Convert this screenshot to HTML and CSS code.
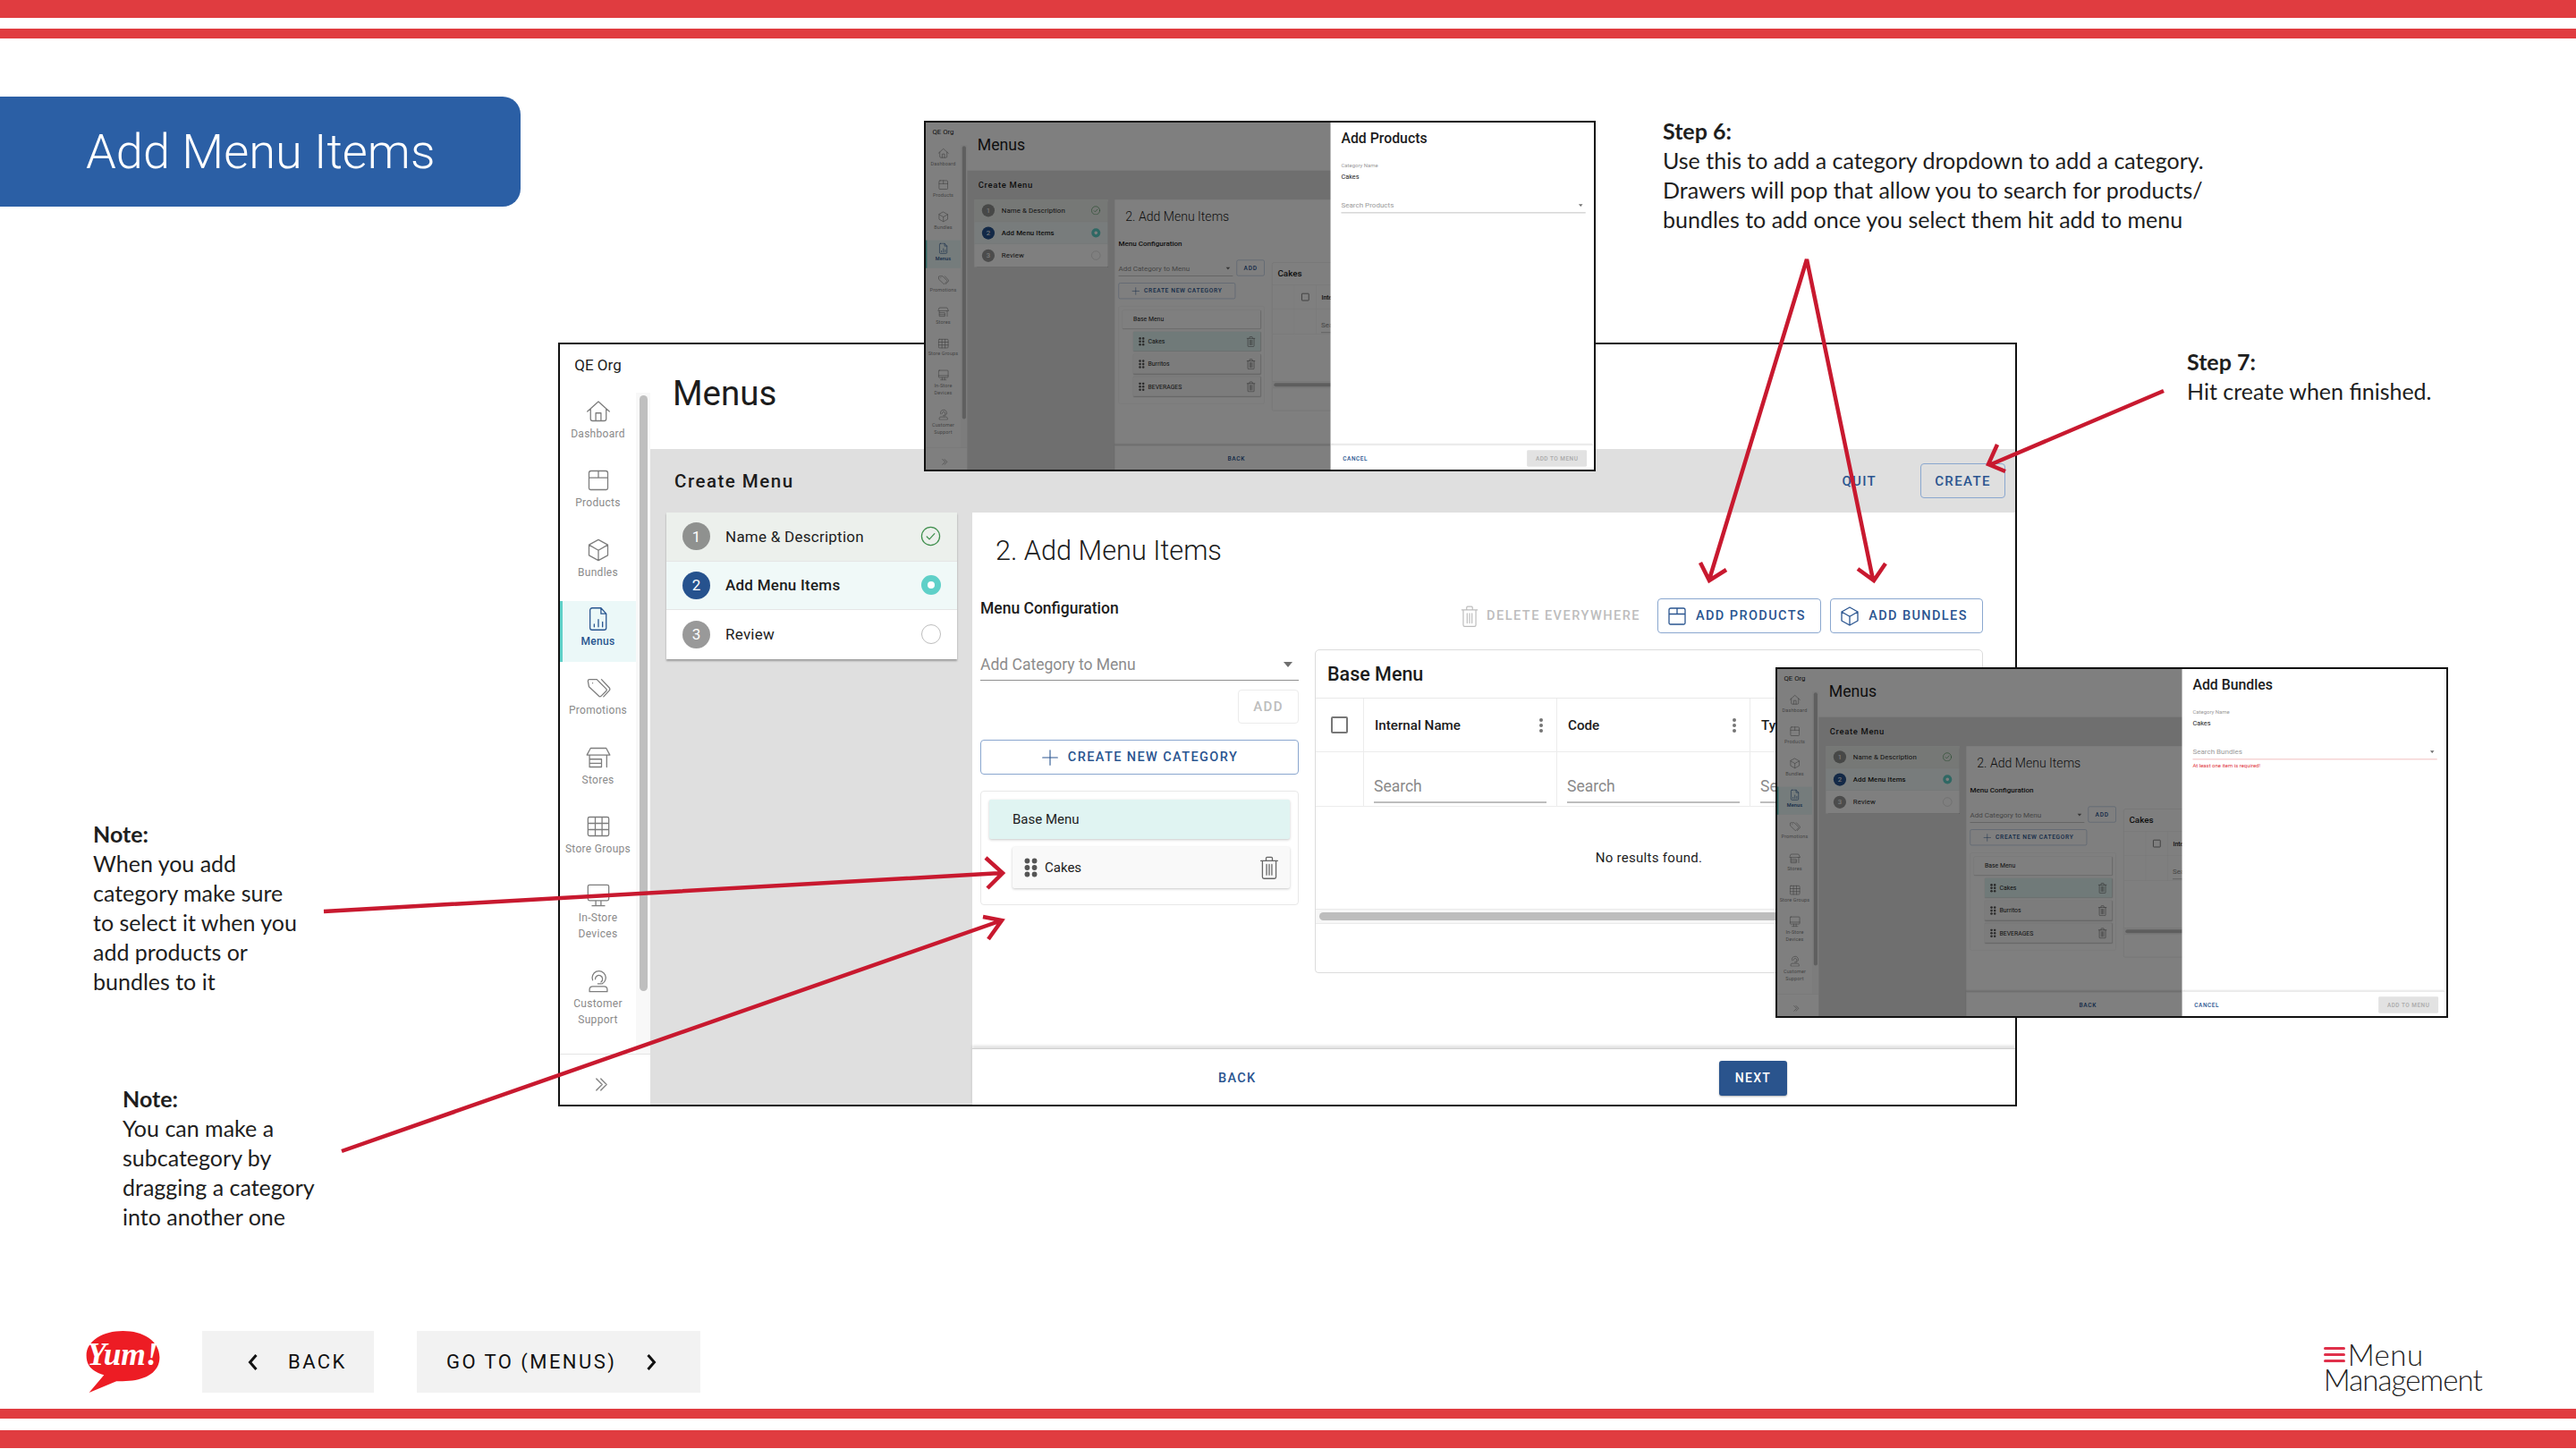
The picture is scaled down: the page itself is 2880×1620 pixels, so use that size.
FILE: index.html
```html
<!DOCTYPE html>
<html lang="en">
<head>
<meta charset="utf-8">
<title>Add Menu Items</title>
<link rel="stylesheet" href="styles.css">
</head>
<body>
<svg class="sprite" xmlns="http://www.w3.org/2000/svg">
  <symbol id="i-home" viewBox="0 0 24 24"><path d="M1.500 12 12 2.500 22.500 12M4.500 9.500V19a2 2 0 0 0 2 2h11a2 2 0 0 0 2-2V9.500M9.500 21v-7.500h5V21"/></symbol>
  <symbol id="i-box" viewBox="0 0 24 24"><path d="M5 3h14a2 2 0 0 1 2 2v14.500a1.500 1.500 0 0 1-1.500 1.500h-15A1.500 1.500 0 0 1 3 19.500V5a2 2 0 0 1 2-2zM3 9.500h18M12 3v6.500"/></symbol>
  <symbol id="i-cube" viewBox="0 0 24 24"><path d="m12 2 9 5v10l-9 5-9-5V7zM3 7l9 5.200L21 7M12 12.200V22"/></symbol>
  <symbol id="i-doc" viewBox="0 0 24 24"><path d="M6 1.500h8.500l5 5.500v13.500a2 2 0 0 1-2 2H6a2 2 0 0 1-2-2v-17a2 2 0 0 1 2-2zM14.500 1.500V7h5M8 19.500v-2.500M12 19.500v-7M16 19.500v-4.500"/></symbol>
  <symbol id="i-tags" viewBox="0 0 24 24"><path d="M2 5.500A1.500 1.500 0 0 1 3.500 4h7l9 9a1.500 1.500 0 0 1 0 2l-5 5a1.500 1.500 0 0 1-2 0L3 11zM15 4l7.500 8a2 2 0 0 1 0 2.500L17 20.500M6.500 7.500h.01"/></symbol>
  <symbol id="i-store" viewBox="0 0 24 24"><path d="M4.500 3h15l3.500 6.500H1zM3.500 9.500V21H15V13.500H3.500M3.500 17.500H15M20 9.500V21"/></symbol>
  <symbol id="i-grid" viewBox="0 0 24 24"><path d="M3.500 3h17a1.500 1.500 0 0 1 1.500 1.500v15a1.500 1.500 0 0 1-1.500 1.500h-17A1.500 1.500 0 0 1 2 19.500v-15A1.500 1.500 0 0 1 3.500 3zM2 9h20M2 15h20M9 3v18M15.500 3v18"/></symbol>
  <symbol id="i-screen" viewBox="0 0 24 24"><path d="M3.500 2h17A1.500 1.500 0 0 1 22 3.500v12a1.500 1.500 0 0 1-1.500 1.500h-17A1.500 1.500 0 0 1 2 15.500v-12A1.500 1.500 0 0 1 3.500 2zM2 13h20M9.500 17v5M14.500 17v5M6 22h12"/></symbol>
  <symbol id="i-head" viewBox="0 0 24 24"><path d="M6.500 11a6.500 6.500 0 1 1 9 3.500M9 10a3.500 3.500 0 1 1 5.500 2.800M11.500 14.500h3M3.500 22v-2.500a3 3 0 0 1 3-2.500h11a3 3 0 0 1 3 2.500V22z"/></symbol>
  <symbol id="i-chev2" viewBox="0 0 24 24"><path d="m4 3 9 9-9 9M11 3l9 9-9 9"/></symbol>
  <symbol id="i-trash" viewBox="0 0 24 24"><path d="M4 5.500h16M9 5.500V3a1 1 0 0 1 1-1h4a1 1 0 0 1 1 1v2.500M5.500 5.500V21a1.500 1.500 0 0 0 1.500 1.500h10a1.500 1.500 0 0 0 1.500-1.500V5.500M9.500 9v10M12 9v10M14.500 9v10"/></symbol>
  <symbol id="i-plus" viewBox="0 0 24 24"><path d="M12 2v20M2 12h20"/></symbol>
  <symbol id="i-check" viewBox="0 0 24 24"><circle cx="12" cy="12" r="10.500"/><path d="m7.500 12.500 3 3 6-6.500"/></symbol>
  <symbol id="i-grip" viewBox="0 0 14 20"><circle cx="3.200" cy="3" r="2.700"/><circle cx="10.800" cy="3" r="2.700"/><circle cx="3.200" cy="10" r="2.700"/><circle cx="10.800" cy="10" r="2.700"/><circle cx="3.200" cy="17" r="2.700"/><circle cx="10.800" cy="17" r="2.700"/></symbol>
  <symbol id="i-kebab" viewBox="0 0 6 18"><circle cx="3" cy="3" r="2"/><circle cx="3" cy="9" r="2"/><circle cx="3" cy="15" r="2"/></symbol>
  <symbol id="i-left" viewBox="0 0 12 20"><path d="M9.500 2 2.500 10l7 8"/></symbol>
  <symbol id="i-right" viewBox="0 0 12 20"><path d="m2.500 2 7 8-7 8"/></symbol>
</svg>

<div class="slide">
  <div class="stripes stripes-top"><span class="stripe stripe-a"></span><span class="stripe stripe-b"></span></div>
  <h1 class="deck-title">Add Menu Items</h1>

  <div class="stage">
    <div class="win win-main">
      <aside class="side">
        <div class="org">QE Org</div>
        <div class="side-scroll">
          <nav class="nav">
            <a class="nav-item"><svg class="ic nav-ic"><use href="#i-home"/></svg><span>Dashboard</span></a>
            <a class="nav-item"><svg class="ic nav-ic"><use href="#i-box"/></svg><span>Products</span></a>
            <a class="nav-item"><svg class="ic nav-ic"><use href="#i-cube"/></svg><span>Bundles</span></a>
            <a class="nav-item is-active"><svg class="ic nav-ic"><use href="#i-doc"/></svg><span>Menus</span></a>
            <a class="nav-item"><svg class="ic nav-ic"><use href="#i-tags"/></svg><span>Promotions</span></a>
            <a class="nav-item"><svg class="ic nav-ic"><use href="#i-store"/></svg><span>Stores</span></a>
            <a class="nav-item"><svg class="ic nav-ic"><use href="#i-grid"/></svg><span>Store Groups</span></a>
            <a class="nav-item nav-item-tall"><svg class="ic nav-ic"><use href="#i-screen"/></svg><span>In-Store<br>Devices</span></a>
            <a class="nav-item nav-item-tall"><svg class="ic nav-ic"><use href="#i-head"/></svg><span>Customer<br>Support</span></a>
          </nav>
          <div class="track"><div class="thumb"></div></div>
        </div>
        <div class="side-foot"><svg class="ic chev2"><use href="#i-chev2"/></svg></div>
      </aside>
      <div class="main">
        <header class="page-head"><h2 class="page-title">Menus</h2></header>
        <div class="work">
          <div class="work-bar">
            <h3 class="work-title">Create Menu</h3>
            <div class="work-actions">
              <span class="txt-btn">QUIT</span>
              <span class="btn btn-create">CREATE</span>
            </div>
          </div>
          <div class="work-body">
            <div class="step-col">
              <ol class="stepper">
                <li class="step step-done"><span class="num">1</span><span class="step-label">Name &amp; Description</span><svg class="ic st-check"><use href="#i-check"/></svg></li>
                <li class="step step-now"><span class="num">2</span><span class="step-label">Add Menu Items</span><span class="st-now"></span></li>
                <li class="step"><span class="num">3</span><span class="step-label">Review</span><span class="st-open"></span></li>
              </ol>
            </div>
            <section class="card">
              <div class="card-body">
                <h3 class="card-title">2. Add Menu Items</h3>
                <div class="cfg-head">
                  <h4 class="cfg-label">Menu Configuration</h4>
                  <div class="tools">
                    <span class="tool-del"><svg class="ic ic-20"><use href="#i-trash"/></svg>DELETE EVERYWHERE</span>
                    <span class="btn btn-tool btn-tool-products"><svg class="ic ic-20"><use href="#i-box"/></svg>ADD PRODUCTS</span>
                    <span class="btn btn-tool btn-tool-bundles"><svg class="ic ic-20"><use href="#i-cube"/></svg>ADD BUNDLES</span>
                  </div>
                </div>
                <div class="cfg">
                  <div class="cfg-left">
                    <div class="add-row">
                      <div class="select"><span>Add Category to Menu</span><i class="caret"></i></div>
                      <span class="btn btn-off">ADD</span>
                    </div>
                    <div class="btn btn-new"><svg class="ic ic-plus"><use href="#i-plus"/></svg>CREATE NEW CATEGORY</div>
                    <div class="cat-list">
                      <div class="cat-base is-sel">Base Menu</div>
                      <div class="cat-row"><svg class="grip"><use href="#i-grip"/></svg><span class="cat-name">Cakes</span><svg class="ic ic-trash"><use href="#i-trash"/></svg></div>
                    </div>
                  </div>
                  <div class="panel">
                    <h4 class="panel-title">Base Menu</h4>
                    <div class="tbl">
                      <div class="cell cell-box"><i class="checkbox"></i></div>
                      <div class="cell cell-h">Internal Name<svg class="kebab"><use href="#i-kebab"/></svg></div>
                      <div class="cell cell-h">Code<svg class="kebab"><use href="#i-kebab"/></svg></div>
                      <div class="cell cell-h">Type</div>
                      <div class="cell cell-low"></div>
                      <div class="cell cell-low"><span class="search">Search</span></div>
                      <div class="cell cell-low"><span class="search">Search</span></div>
                      <div class="cell cell-low"><span class="search">Search</span></div>
                      <div class="tbl-empty">No results found.</div>
                      <div class="tbl-scroll"><div class="tbl-thumb"></div></div>
                    </div>
                  </div>
                </div>
              </div>
              <footer class="card-foot">
                <span class="txt-btn foot-back">BACK</span>
                <span class="btn-next">NEXT</span>
              </footer>
            </section>
          </div>
        </div>
      </div>
    </div>

    <div class="shot shot-products">
      <div class="win win-mini">
        <aside class="side">
          <div class="org">QE Org</div>
          <div class="side-scroll">
            <nav class="nav">
              <a class="nav-item"><svg class="ic nav-ic"><use href="#i-home"/></svg><span>Dashboard</span></a>
              <a class="nav-item"><svg class="ic nav-ic"><use href="#i-box"/></svg><span>Products</span></a>
              <a class="nav-item"><svg class="ic nav-ic"><use href="#i-cube"/></svg><span>Bundles</span></a>
              <a class="nav-item is-active"><svg class="ic nav-ic"><use href="#i-doc"/></svg><span>Menus</span></a>
              <a class="nav-item"><svg class="ic nav-ic"><use href="#i-tags"/></svg><span>Promotions</span></a>
              <a class="nav-item"><svg class="ic nav-ic"><use href="#i-store"/></svg><span>Stores</span></a>
              <a class="nav-item"><svg class="ic nav-ic"><use href="#i-grid"/></svg><span>Store Groups</span></a>
              <a class="nav-item nav-item-tall"><svg class="ic nav-ic"><use href="#i-screen"/></svg><span>In-Store<br>Devices</span></a>
              <a class="nav-item nav-item-tall"><svg class="ic nav-ic"><use href="#i-head"/></svg><span>Customer<br>Support</span></a>
            </nav>
            <div class="track"><div class="thumb"></div></div>
          </div>
          <div class="side-foot"><svg class="ic chev2"><use href="#i-chev2"/></svg></div>
        </aside>
        <div class="main">
          <header class="page-head"><h2 class="page-title">Menus</h2></header>
          <div class="work">
            <div class="work-bar"><h3 class="work-title">Create Menu</h3></div>
            <div class="work-body">
              <div class="step-col">
                <ol class="stepper">
                  <li class="step step-done"><span class="num">1</span><span class="step-label">Name &amp; Description</span><svg class="ic st-check"><use href="#i-check"/></svg></li>
                  <li class="step step-now"><span class="num">2</span><span class="step-label">Add Menu Items</span><span class="st-now"></span></li>
                  <li class="step"><span class="num">3</span><span class="step-label">Review</span><span class="st-open"></span></li>
                </ol>
              </div>
              <section class="card">
                <div class="card-body">
                  <h3 class="card-title">2. Add Menu Items</h3>
                  <div class="cfg-head"><h4 class="cfg-label">Menu Configuration</h4></div>
                  <div class="cfg">
                    <div class="cfg-left">
                      <div class="add-row">
                        <div class="select"><span>Add Category to Menu</span><i class="caret"></i></div>
                        <span class="btn btn-add">ADD</span>
                      </div>
                      <div class="btn btn-new"><svg class="ic ic-plus"><use href="#i-plus"/></svg>CREATE NEW CATEGORY</div>
                      <div class="cat-list">
                        <div class="cat-base">Base Menu</div>
                        <div class="cat-row is-sel"><svg class="grip"><use href="#i-grip"/></svg><span class="cat-name">Cakes</span><svg class="ic ic-trash"><use href="#i-trash"/></svg></div>
                        <div class="cat-row"><svg class="grip"><use href="#i-grip"/></svg><span class="cat-name">Burritos</span><svg class="ic ic-trash"><use href="#i-trash"/></svg></div>
                        <div class="cat-row"><svg class="grip"><use href="#i-grip"/></svg><span class="cat-name">BEVERAGES</span><svg class="ic ic-trash"><use href="#i-trash"/></svg></div>
                      </div>
                    </div>
                    <div class="panel">
                      <h4 class="panel-title">Cakes</h4>
                      <div class="tbl tbl-drag">
                        <div class="cell"></div>
                        <div class="cell cell-box"><i class="checkbox"></i></div>
                        <div class="cell cell-h">Internal Name</div>
                        <div class="cell cell-low"></div>
                        <div class="cell cell-low"></div>
                        <div class="cell cell-low"><span class="search">Search</span></div>
                        <div class="tbl-empty"></div>
                        <div class="tbl-scroll"><div class="tbl-thumb"></div></div>
                      </div>
                    </div>
                  </div>
                </div>
                <footer class="card-foot"><span class="txt-btn foot-back">BACK</span></footer>
              </section>
            </div>
          </div>
        </div>
        <div class="scrim"></div>
        <div class="drawer">
          <h3 class="drawer-title">Add Products</h3>
          <div class="drawer-body">
            <div class="field-label">Category Name</div>
            <div class="field-value">Cakes</div>
            <div class="select drawer-select"><span>Search Products</span><i class="caret"></i></div>
          </div>
          <footer class="drawer-foot"><span class="txt-btn drawer-cancel">CANCEL</span><span class="btn-disabled">ADD TO MENU</span></footer>
        </div>
      </div>
    </div>

    <div class="shot shot-bundles">
      <div class="win win-mini">
        <aside class="side">
          <div class="org">QE Org</div>
          <div class="side-scroll">
            <nav class="nav">
              <a class="nav-item"><svg class="ic nav-ic"><use href="#i-home"/></svg><span>Dashboard</span></a>
              <a class="nav-item"><svg class="ic nav-ic"><use href="#i-box"/></svg><span>Products</span></a>
              <a class="nav-item"><svg class="ic nav-ic"><use href="#i-cube"/></svg><span>Bundles</span></a>
              <a class="nav-item is-active"><svg class="ic nav-ic"><use href="#i-doc"/></svg><span>Menus</span></a>
              <a class="nav-item"><svg class="ic nav-ic"><use href="#i-tags"/></svg><span>Promotions</span></a>
              <a class="nav-item"><svg class="ic nav-ic"><use href="#i-store"/></svg><span>Stores</span></a>
              <a class="nav-item"><svg class="ic nav-ic"><use href="#i-grid"/></svg><span>Store Groups</span></a>
              <a class="nav-item nav-item-tall"><svg class="ic nav-ic"><use href="#i-screen"/></svg><span>In-Store<br>Devices</span></a>
              <a class="nav-item nav-item-tall"><svg class="ic nav-ic"><use href="#i-head"/></svg><span>Customer<br>Support</span></a>
            </nav>
            <div class="track"><div class="thumb"></div></div>
          </div>
          <div class="side-foot"><svg class="ic chev2"><use href="#i-chev2"/></svg></div>
        </aside>
        <div class="main">
          <header class="page-head"><h2 class="page-title">Menus</h2></header>
          <div class="work">
            <div class="work-bar"><h3 class="work-title">Create Menu</h3></div>
            <div class="work-body">
              <div class="step-col">
                <ol class="stepper">
                  <li class="step step-done"><span class="num">1</span><span class="step-label">Name &amp; Description</span><svg class="ic st-check"><use href="#i-check"/></svg></li>
                  <li class="step step-now"><span class="num">2</span><span class="step-label">Add Menu Items</span><span class="st-now"></span></li>
                  <li class="step"><span class="num">3</span><span class="step-label">Review</span><span class="st-open"></span></li>
                </ol>
              </div>
              <section class="card">
                <div class="card-body">
                  <h3 class="card-title">2. Add Menu Items</h3>
                  <div class="cfg-head"><h4 class="cfg-label">Menu Configuration</h4></div>
                  <div class="cfg">
                    <div class="cfg-left">
                      <div class="add-row">
                        <div class="select"><span>Add Category to Menu</span><i class="caret"></i></div>
                        <span class="btn btn-add">ADD</span>
                      </div>
                      <div class="btn btn-new"><svg class="ic ic-plus"><use href="#i-plus"/></svg>CREATE NEW CATEGORY</div>
                      <div class="cat-list">
                        <div class="cat-base">Base Menu</div>
                        <div class="cat-row is-sel"><svg class="grip"><use href="#i-grip"/></svg><span class="cat-name">Cakes</span><svg class="ic ic-trash"><use href="#i-trash"/></svg></div>
                        <div class="cat-row"><svg class="grip"><use href="#i-grip"/></svg><span class="cat-name">Burritos</span><svg class="ic ic-trash"><use href="#i-trash"/></svg></div>
                        <div class="cat-row"><svg class="grip"><use href="#i-grip"/></svg><span class="cat-name">BEVERAGES</span><svg class="ic ic-trash"><use href="#i-trash"/></svg></div>
                      </div>
                    </div>
                    <div class="panel">
                      <h4 class="panel-title">Cakes</h4>
                      <div class="tbl tbl-drag">
                        <div class="cell"></div>
                        <div class="cell cell-box"><i class="checkbox"></i></div>
                        <div class="cell cell-h">Internal Name</div>
                        <div class="cell cell-low"></div>
                        <div class="cell cell-low"></div>
                        <div class="cell cell-low"><span class="search">Search</span></div>
                        <div class="tbl-empty"></div>
                        <div class="tbl-scroll"><div class="tbl-thumb"></div></div>
                      </div>
                    </div>
                  </div>
                </div>
                <footer class="card-foot"><span class="txt-btn foot-back">BACK</span></footer>
              </section>
            </div>
          </div>
        </div>
        <div class="scrim"></div>
        <div class="drawer">
          <h3 class="drawer-title">Add Bundles</h3>
          <div class="drawer-body">
            <div class="field-label">Category Name</div>
            <div class="field-value">Cakes</div>
            <div class="select drawer-select is-error"><span>Search Bundles</span><i class="caret"></i></div>
            <div class="field-error">At least one item is required!</div>
          </div>
          <footer class="drawer-foot"><span class="txt-btn drawer-cancel">CANCEL</span><span class="btn-disabled">ADD TO MENU</span></footer>
        </div>
      </div>
    </div>

    <div class="callout callout-step6"><strong>Step 6:</strong><br>Use this to add a category dropdown to add a category.<br>Drawers will pop that allow you to search for products/<br>bundles to add once you select them hit add to menu</div>
    <div class="callout callout-step7"><strong>Step 7:</strong><br>Hit create when finished.</div>
    <div class="callout callout-note1"><strong>Note:</strong><br>When you add<br>category make sure<br>to select it when you<br>add products or<br>bundles to it</div>
    <div class="callout callout-note2"><strong>Note:</strong><br>You can make a<br>subcategory by<br>dragging a category<br>into another one</div>

    <svg class="arrows" viewBox="0 0 2880 1620" xmlns="http://www.w3.org/2000/svg">
      <path d="M362 1019 1120 976M1102 959l19 17-17 17"/>
      <path d="M382 1287 1120 1029M1099 1025l21 4-15 21"/>
      <path d="M1911 648 2020 290 2094 648M1901 629l10 20 19-12M2077 636l18 13 13-19"/>
      <path d="M2419 437 2224 520M2233 497l-10 22 19 8"/>
    </svg>
  </div>

  <footer class="deck-foot">
    <svg class="yum" viewBox="0 0 83 70" xmlns="http://www.w3.org/2000/svg">
      <path class="yum-bubble" d="M41.500 0C64 0 83 11 83 30 83 48 65 57 41 57c-2 0-5 0-7 0L3 70 20 50C7 46 0 40 0 28 0 11 19 0 41.500 0z"/>
      <text class="yum-text" x="41" y="39" text-anchor="middle">Yum!</text>
    </svg>
    <a class="nav-btn nav-btn-back"><svg class="nav-chev"><use href="#i-left"/></svg>BACK</a>
    <a class="nav-btn nav-btn-go">GO TO (MENUS)<svg class="nav-chev"><use href="#i-right"/></svg></a>
    <div class="mm-logo">
      <div class="mm-top"><span class="mm-bars"><i></i><i></i><i></i></span><span>Menu</span></div>
      <div class="mm-bottom">Management</div>
    </div>
  </footer>
  <div class="stripes stripes-bottom"><span class="stripe stripe-b"></span><span class="stripe stripe-a"></span></div>
</div>
</body>
</html>
```

FILE: styles.css
```css
* { box-sizing: border-box; }
html, body { margin: 0; padding: 0; }
body { width: 2880px; height: 1620px; overflow: hidden; background: #fff; font-family: Roboto, "Liberation Sans", sans-serif; color: #1c1c1c; }
h1, h2, h3, h4, ol { margin: 0; padding: 0; font-weight: 400; }
ol { list-style: none; }
.sprite { position: absolute; width: 0; height: 0; }

.slide { position: relative; width: 2880px; height: 1620px; display: flex; flex-direction: column; background: #fff; }
.stripes { display: flex; flex-direction: column; flex: none; }
.stripe { display: block; background: #e03c40; }
.stripes-top { gap: 12px; }
.stripes-bottom { gap: 13px; margin-top: 18px; margin-bottom: 1px; }
.stripe-a { height: 20px; }
.stripe-b { height: 11px; }

.deck-title { flex: none; width: 582px; height: 123px; margin-top: 65px; padding-left: 96px; display: flex; align-items: center; background: #2b5fa5; border-radius: 0 20px 20px 0; color: #fff; font-weight: 300; font-size: 54.200px; white-space: nowrap; }

.stage { flex: 1; }

/* annotation windows on the slide canvas */
.win { display: flex; background: #fff; overflow: hidden; }
.win-main { position: absolute; left: 624px; top: 383px; width: 1631px; height: 854px; border: 2px solid #111; }
.shot { position: absolute; width: 751px; height: 392px; border: 2px solid #111; overflow: hidden; background: #fff; }
.shot-products { left: 1033px; top: 135px; }
.shot-bundles { left: 1985px; top: 746px; width: 752px; }
.win-mini { position: relative; width: 1627px; height: 850px; transform: scale(.4585); transform-origin: 0 0; }

/* sidebar */
.side { flex: none; width: 101px; display: flex; flex-direction: column; background: #fff; }
.org { flex: none; height: 54px; display: flex; align-items: center; justify-content: center; padding: 0 16px 8px 0; font-size: 17px; }
.side-scroll { flex: 1; min-height: 0; display: flex; }
.nav { flex: none; width: 85px; display: flex; flex-direction: column; gap: 9.330px; padding-top: 1px; }
.nav-item { display: flex; flex-direction: column; align-items: center; min-height: 68px; padding-top: 6px; font-size: 12px; line-height: 18px; letter-spacing: .3px; color: #8a8a8a; text-align: center; white-space: nowrap; }
.nav-item-tall { min-height: 86px; }
.nav-item .nav-ic { width: 28px; height: 28px; margin-bottom: 2px; color: #7d7d7d; stroke-width: 1.100; }
.nav-item.is-active { background: #ebf8f8; border-left: 3px solid #5fd0c8; color: #27548f; font-weight: 500; }
.nav-item.is-active .nav-ic { color: #27548f; margin-right: 3px; }
.nav-item.is-active span { margin-right: 3px; }
.track { flex: none; width: 16px; background: #f8f8f8; padding: 3px 3px 0 4px; }
.thumb { height: 666px; background: #bfbfbf; border-radius: 5px; }
.side-foot { flex: none; height: 57px; border-top: 1px solid #e4e4e4; display: flex; align-items: center; justify-content: center; padding: 10px 8px 0 0; }
.ic { width: 24px; height: 24px; fill: none; stroke: currentColor; stroke-width: 1.300; stroke-linecap: round; stroke-linejoin: round; flex: none; }
.chev2 { width: 17px; height: 17px; color: #8a8a8a; stroke-width: 2; }

/* main */
.main { flex: 1; min-width: 0; display: flex; flex-direction: column; }
.page-head { flex: none; height: 117px; padding: 0 0 8px 25px; display: flex; align-items: center; }
.page-title { font-size: 38.500px; }
.work { flex: 1; min-height: 0; display: flex; flex-direction: column; background: #dfdfdf; }
.work-bar { flex: none; height: 71px; padding: 0 11px 0 27px; display: flex; align-items: center; justify-content: space-between; }
.work-title { font-size: 20.500px; font-weight: 500; letter-spacing: 1.500px; }
.work-actions { display: flex; align-items: center; gap: 49px; }
.txt-btn { font-size: 15px; font-weight: 500; letter-spacing: 1.300px; color: #2a5590; }
.btn { display: flex; align-items: center; justify-content: center; border: 1.500px solid #8aa7cf; border-radius: 4px; background: transparent; color: #2a5590; font-size: 14.500px; font-weight: 500; letter-spacing: 1.400px; white-space: nowrap; }
.btn-create { width: 95px; height: 39px; font-size: 15px; }
.work-body { flex: 1; min-height: 0; display: flex; }
.step-col { flex: none; width: 360px; padding-left: 18px; }
.stepper { width: 325px; background: #fff; box-shadow: 0 2px 2px rgba(0,0,0,.3); }
.step { height: 54.600px; display: flex; align-items: center; padding: 0 18px; border-bottom: 1px solid #e6e6e6; background: #fff; }
.step:last-child { border-bottom: none; }
.step-done { background: #ecf0ec; }
.step-now { background: #f0f9f8; font-weight: 500; }
.num { flex: none; width: 31px; height: 31px; border-radius: 50%; background: #999; color: #fff; display: flex; align-items: center; justify-content: center; font-size: 17px; font-weight: 400; }
.step-now .num { background: #26528e; }
.step-done .num { background: #8f918f; }
.step-label { flex: 1; margin-left: 17px; font-size: 17px; letter-spacing: .25px; }
.st-check { width: 23px; height: 23px; color: #3f8f4d; }
.st-now { flex: none; width: 22px; height: 22px; border-radius: 50%; background: #fff; border: 7px solid #5fd0c8; }
.st-open { flex: none; width: 22px; height: 22px; border-radius: 50%; background: #fff; border: 1.500px solid #bdbdbd; }

.card { flex: 1; min-width: 0; display: flex; flex-direction: column; background: #fff; }
.card-body { flex: 1; min-height: 0; padding: 0 36px 0 9px; }
.card-title { height: 87px; padding: 25px 0 0 17px; font-size: 30.700px; font-weight: 300; line-height: 36px; }
.cfg-head { height: 48px; display: flex; justify-content: space-between; }
.cfg-label { height: 40px; display: flex; align-items: center; font-size: 17.500px; font-weight: 500; }
.tools { padding-top: 9px; display: flex; gap: 10px; align-items: flex-start; }
.tool-del { display: flex; align-items: center; gap: 6px; height: 39px; margin-right: 9px; color: #bdbdbd; font-size: 14.500px; font-weight: 500; letter-spacing: 1.500px; }
.tool-del .ic { width: 26px; height: 26px; stroke-width: 1.100; }
.ic-20 { width: 24px; height: 24px; }
.btn-tool { height: 39px; padding: 0 17px 0 10px; gap: 9px; }
.btn-tool-products { width: 183px; }
.btn-tool-bundles { width: 171px; }
.cfg { display: flex; gap: 18px; margin-top: 18px; }
.cfg-left { flex: none; width: 356px; }
.add-row { display: flex; flex-wrap: wrap; justify-content: flex-end; }
.select { width: 100%; height: 35px; display: flex; align-items: center; justify-content: space-between; border-bottom: 1px solid #8f8f8f; font-size: 17.500px; color: #8c8c8c; padding: 0 7px 0 0; }
.caret { width: 0; height: 0; border-left: 5.500px solid transparent; border-right: 5.500px solid transparent; border-top: 6px solid #6f6f6f; }
.btn-off { width: 68px; height: 38px; margin-top: 10px; border: 1.500px solid #ebebeb; color: #bdbdbd; font-size: 15px; }
.btn-new { height: 39px; margin-top: 18px; gap: 10px; }
.ic-plus { width: 20px; height: 20px; }
.cat-list { margin-top: 18px; padding: 9px 9px 18px; border: 1.500px solid #e8e8e8; border-radius: 4px; display: flex; flex-direction: column; gap: 9px; }
.cat-base { height: 44px; padding-left: 26px; display: flex; align-items: center; font-size: 15px; background: #fff; box-shadow: 0 1px 3px rgba(0,0,0,.22); border-radius: 2px; }
.cat-row { margin-left: 26px; height: 46px; padding: 0 9px 0 13px; display: flex; align-items: center; font-size: 15px; background: #f9f9f9; box-shadow: 0 1px 3px rgba(0,0,0,.22); border-radius: 2px; }
.cat-base.is-sel, .cat-row.is-sel { background: #e0f4f2; }
.grip { width: 15px; height: 22px; fill: #555; flex: none; }
.cat-name { flex: 1; margin-left: 8px; }
.ic-trash { width: 28px; height: 28px; color: #666; stroke-width: 1.100; }

.panel { flex: 1; min-width: 0; height: 362px; border: 1.500px solid #dcdcdc; border-radius: 5px 5px 4px 4px; overflow: hidden; }
.panel-title { height: 53px; padding-left: 13px; display: flex; align-items: center; font-size: 21.500px; font-weight: 500; }
.tbl { display: grid; grid-template-columns: 54px 216px 216px 1fr; grid-template-rows: 60px 61px 114px 17px; border-top: 1px solid #e8e8e8; }
.tbl-drag { grid-template-columns: 54px 54px 1fr; }
.cell { border-right: 1px solid #ececec; border-bottom: 1px solid #ececec; min-width: 0; }
.cell-box { display: flex; align-items: center; justify-content: center; }
.checkbox { width: 19px; height: 19px; border: 2px solid #777; border-radius: 2px; }
.cell-h { display: flex; align-items: center; justify-content: space-between; padding: 0 12px; font-size: 15.200px; font-weight: 500; }
.kebab { width: 6px; height: 18px; fill: #757575; flex: none; margin-right: 2px; }
.cell-low { display: flex; align-items: flex-end; padding: 0 11px 3px 11px; }
.search { display: block; width: 100%; height: 35px; border-bottom: 2px solid #bdbdbd; font-size: 17.500px; color: #8a8a8a; line-height: 32px; }
.tbl-empty { grid-column: 1 / -1; display: flex; align-items: center; justify-content: center; font-size: 15px; letter-spacing: .3px; }
.tbl-scroll { grid-column: 1 / -1; background: #f7f7f7; border-top: 1px solid #eaeaea; border-bottom: 1px solid #eaeaea; padding: 3px 4px; }
.tbl-thumb { height: 9px; width: 560px; background: #bdbdbd; border-radius: 5px; }
.card-foot { flex: none; height: 63px; display: flex; align-items: center; padding: 2px 255px 0 275px; justify-content: space-between; border-top: 1px solid #d0d0d0; box-shadow: 0 -3px 3px rgba(0,0,0,.12); position: relative; }
.foot-back { font-size: 14.500px; }
.btn-next { width: 76px; height: 39px; display: flex; align-items: center; justify-content: center; background: #2a548d; color: #fff; border-radius: 3px; font-size: 14px; font-weight: 500; letter-spacing: 1.300px; box-shadow: 0 1px 2px rgba(0,0,0,.3); }

/* mini variant */
.win-mini .add-row { flex-wrap: nowrap; align-items: flex-end; gap: 9px; height: 39px; margin-top: -6px; }
.win-mini .select { flex: 1; width: auto; }
.btn-add { flex: none; width: 68px; height: 39px; }
.win-mini .btn-new { margin-top: 17px; width: 285px; }
.win-mini .cat-list { gap: 8px; }
.win-mini .cat-row { height: 47px; }
.scrim { position: absolute; inset: 0; background: rgba(0,0,0,.5); }
.drawer { position: absolute; top: 0; right: 0; bottom: 0; width: 640px; background: #fff; display: flex; flex-direction: column; }
.drawer-title { flex: none; height: 77px; padding: 21px 0 0 26px; font-size: 34.500px; font-weight: 500; line-height: 36px; }
.drawer-body { flex: 1; padding: 0 18px 0 26px; }
.field-label { margin-top: 20px; font-size: 13px; color: #9a9a9a; }
.field-value { margin-top: 11px; font-size: 16px; }
.drawer-select { margin-top: 43px; height: 36px; border-bottom: 2px solid #bdbdbd; color: #9a9a9a; }
.drawer-select.is-error { border-bottom-color: #f0b8b8; }
.field-error { margin-top: 7px; font-size: 13px; color: #e0343c; }
.drawer-foot { flex: none; height: 64px; display: flex; align-items: center; justify-content: space-between; padding: 0 15px 0 30px; border-top: 1px solid #d0d0d0; box-shadow: 0 -2px 3px rgba(0,0,0,.12); }
.btn-disabled { width: 146px; height: 40px; display: flex; align-items: center; justify-content: center; background: #e2e2e2; color: #aaa; border-radius: 3px; font-size: 14px; font-weight: 500; letter-spacing: 1.100px; }
.drawer-cancel { font-size: 14px; }

/* callouts */
.callout { position: absolute; font-family: Lato, "Open Sans", sans-serif; font-size: 25px; line-height: 33px; color: #1e1e1e; white-space: nowrap; }
.callout strong { font-weight: 700; }
.callout-step6 { left: 1859px; top: 130px; }
.callout-step7 { left: 2445px; top: 388px; }
.callout-note1 { left: 104px; top: 916px; }
.callout-note2 { left: 137px; top: 1212px; }
.arrows { position: absolute; left: 0; top: 0; width: 2880px; height: 1620px; fill: none; stroke: #c8192f; stroke-width: 4.500px; pointer-events: none; }

/* footer */
.deck-foot { flex: none; height: 69px; padding: 0 105px 0 96px; display: flex; align-items: stretch; }
.yum { flex: none; width: 83px; height: 69px; margin-right: 47px; }
.yum-bubble { fill: #ed1c24; }
.yum-text { font-family: "Liberation Serif", serif; font-weight: 700; font-style: italic; font-size: 36px; fill: #fff; }
.nav-btn { flex: none; display: flex; align-items: center; background: #f2f2f2; color: #111; font-size: 22px; letter-spacing: 2.450px; white-space: nowrap; }
.nav-btn-back { width: 192px; padding-left: 51px; gap: 33px; margin-right: 48px; }
.nav-btn-go { width: 317px; padding-left: 33px; gap: 33px; }
.nav-chev { width: 12px; height: 20px; fill: none; stroke: #111; stroke-width: 3; flex: none; }
.mm-logo { margin-left: auto; margin-top: 12px; font-family: Lato, sans-serif; font-weight: 300; font-size: 33px; line-height: 28px; color: #222; letter-spacing: .5px; }
.mm-top { display: flex; align-items: center; gap: 3px; }
.mm-bottom { letter-spacing: -.9px; }
.mm-bars { display: flex; flex-direction: column; gap: 4px; }
.mm-bars i { display: block; width: 24px; height: 3px; background: #e0304a; border-radius: 2px; }
```
